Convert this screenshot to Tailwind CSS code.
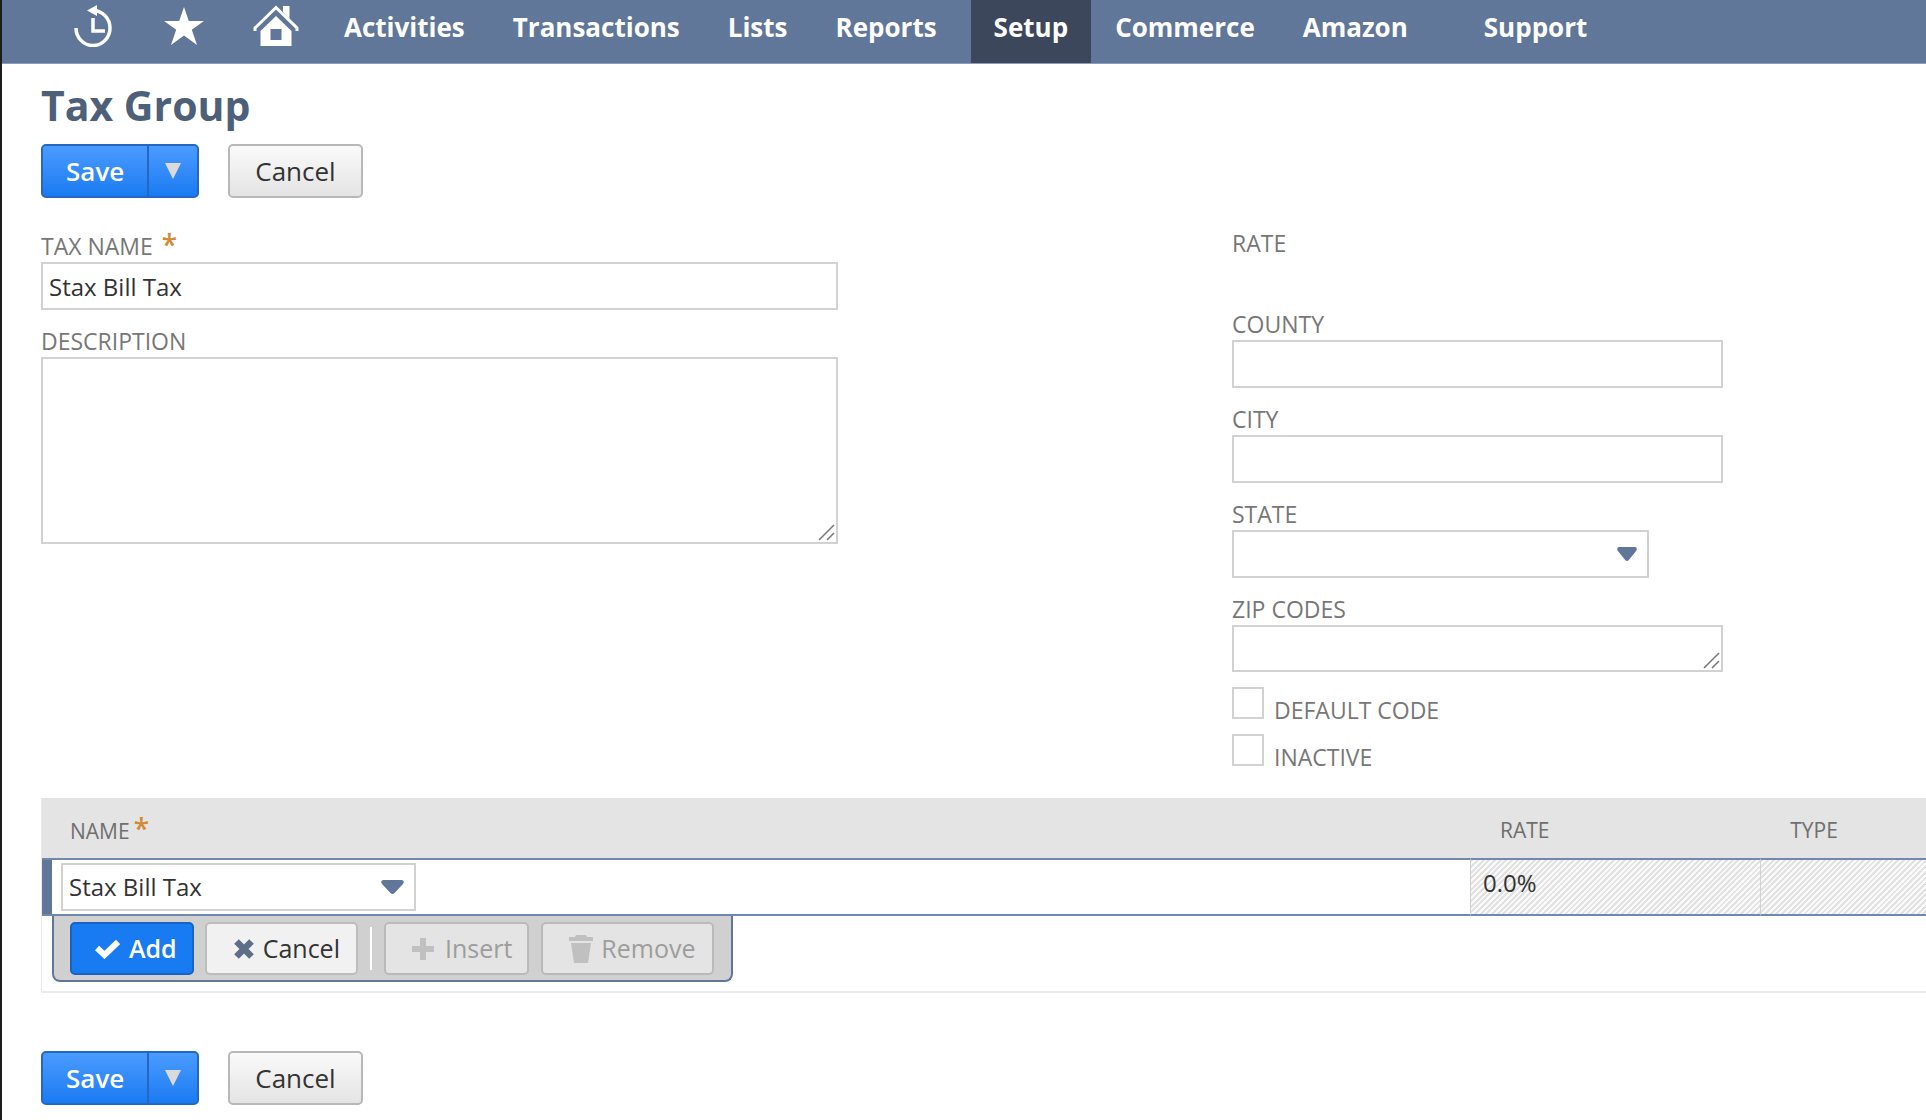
<!DOCTYPE html>
<html lang="en">
<head>
  <meta charset="UTF-8" />
  <meta name="viewport" content="width=device-width, initial-scale=1" />
  <title>Tax Group</title>
  <script src="https://cdn.jsdelivr.net/npm/@tailwindcss/browser@4"></script>
</head>
<body class="min-h-screen bg-white border-l-2 border-[#1c1c1c] font-['Open_Sans','Noto_Sans',sans-serif] text-2xl text-[#333333] overflow-x-hidden">

  <!-- Navigation -->
  <header class="bg-[#607799] border-b border-[#8c9dba]">
    <nav class="flex items-stretch h-[63px] pl-[71px] text-[26px] leading-[54px] font-bold text-white whitespace-nowrap">
      <a href="#" aria-label="Recent records" class="mr-[50px] pt-[5px]">
        <svg class="w-[40px] h-[42px]" viewBox="0 0 40 42" fill="none" stroke="#fff" stroke-width="3.500">
          <path d="M3 23a17 17.500 0 1 0 17-17.500" />
          <path d="M20 13v13h12" />
          <path d="M24 0v11L14 5.500z" fill="#fff" stroke="none" />
        </svg>
      </a>
      <a href="#" aria-label="Shortcuts" class="mr-[48px] pt-[6px]">
        <svg class="w-[42px] h-[40px]" viewBox="0 0 42 40" fill="#fff">
          <path d="M21 1l4.800 14H41L28.800 23.800 34 39 21 29.500 8 39l5.200-15.200L1 15h15.200z" />
        </svg>
      </a>
      <a href="#" aria-label="Home" class="mr-[21px] pt-[5px]">
        <svg class="w-[46px] h-[42px]" viewBox="0 0 46 42">
          <path d="M2 26V23L23 2.500 44 23v3" fill="none" stroke="#fff" stroke-width="3" />
          <path d="M30 1h6.500v13L30 7z" fill="#fff" />
          <path fill-rule="evenodd" d="M23 11L38.500 26v15h-31V26zM17.500 24v11h11V24z" fill="#fff" />
        </svg>
      </a>
      <a href="#" class="px-6">Activities</a>
      <a href="#" class="px-6">Transactions</a>
      <a href="#" class="px-6">Lists</a>
      <a href="#" class="px-6 mr-[10px]">Reports</a>
      <a href="#" class="px-[23px] bg-[#3c475c]">Setup</a>
      <a href="#" class="px-6">Commerce</a>
      <a href="#" class="px-6">Amazon</a>
      <a href="#" class="px-6 ml-[28px]">Support</a>
    </nav>
  </header>

  <main class="pl-[39px] pt-[17px]">
    <h1 class="text-[41px] leading-[48px] font-bold text-[#4d5f79]">Tax Group</h1>

    <div class="flex gap-[29px] mt-[15px] text-[26px] leading-[50px]">
      <div class="flex h-[54px] border-2 border-[#2468c4] rounded-[5px] bg-linear-to-b from-[#4a9bff] to-[#187bf2]">
        <button type="button" class="px-[23px] font-semibold text-white">Save</button>
        <button type="button" aria-label="More save options" class="w-[50px] border-l-2 border-[#2468c4] flex items-center justify-center">
          <svg class="w-[16px] h-[16px]" viewBox="0 0 16 16" fill="#dadada"><path d="M0 0h16L8 16z" /></svg>
        </button>
      </div>
      <button type="button" class="h-[54px] px-[25px] border-2 border-[#b8b8b8] rounded-[5px] bg-linear-to-b from-[#fafafa] to-[#e4e4e4]">Cancel</button>
    </div>

    <form class="grid grid-cols-[1191fr_694fr] mt-[29px] text-[23px] leading-[32px] text-[#777777]">
      <div class="flex flex-col gap-[15px] pt-[3px] max-w-[797px]">
        <div>
          <label for="taxName" class="block">TAX NAME <span class="ml-[3px] text-[28px] leading-none font-semibold text-[#d08b35]">*</span></label>
          <input id="taxName" type="text" value="Stax Bill Tax" class="block w-full h-12 px-[6px] border-2 border-[#d2d2d2] text-2xl text-[#333333]" />
        </div>
        <div>
          <label for="description" class="block">DESCRIPTION</label>
          <div class="relative">
            <textarea id="description" class="block w-full h-[187px] px-[6px] border-2 border-[#d2d2d2] resize-none"></textarea>
            <svg class="absolute right-[3px] bottom-[3px] w-[17px] h-[17px]" viewBox="0 0 17 17" stroke="#777" stroke-width="1.500"><path d="M1 16L16 1M9 16l7-7" /></svg>
          </div>
        </div>
      </div>

      <div>
        <p class="mb-[49px]">RATE</p>
        <div class="flex flex-col gap-[15px] max-w-[491px]">
          <div>
            <label for="county" class="block">COUNTY</label>
            <input id="county" type="text" class="block w-full h-12 px-[6px] border-2 border-[#d2d2d2]" />
          </div>
          <div>
            <label for="city" class="block">CITY</label>
            <input id="city" type="text" class="block w-full h-12 px-[6px] border-2 border-[#d2d2d2]" />
          </div>
          <div>
            <label for="state" class="block">STATE</label>
            <div class="relative w-[417px] max-w-full">
              <select id="state" class="block appearance-none w-full h-12 px-[6px] border-2 border-[#d2d2d2]"><option></option></select>
              <svg class="absolute right-[12px] top-[17px] w-[20px] h-[14px] pointer-events-none" viewBox="0 0 22 14" preserveAspectRatio="none" fill="#607799"><path d="M2 0h18q3 1 1 4l-8 9q-2 2-4 0L1 4q-2-3 1-4z" /></svg>
            </div>
          </div>
          <div>
            <label for="zip" class="block">ZIP CODES</label>
            <div class="relative">
              <textarea id="zip" rows="1" class="block w-full h-[47px] px-[6px] border-2 border-[#d2d2d2] resize-none"></textarea>
              <svg class="absolute right-[3px] bottom-[3px] w-[17px] h-[17px]" viewBox="0 0 17 17" stroke="#777" stroke-width="1.500"><path d="M1 16L16 1M9 16l7-7" /></svg>
            </div>
          </div>
          <div class="flex flex-col gap-2">
            <div class="flex items-baseline gap-[10px]">
              <input id="defaultCode" type="checkbox" class="appearance-none w-8 h-8 border-2 border-[#d2d2d2]" />
              <label for="defaultCode">DEFAULT CODE</label>
            </div>
            <div class="flex items-baseline gap-[10px]">
              <input id="inactive" type="checkbox" class="appearance-none w-8 h-8 border-2 border-[#d2d2d2]" />
              <label for="inactive">INACTIVE</label>
            </div>
          </div>
        </div>
      </div>
    </form>

    <!-- Tax items -->
    <section class="mt-[25px] border-l border-b-2 border-[#ebebeb] pb-[9px]">
      <table class="w-full table-fixed border-separate border-spacing-0">
        <colgroup>
          <col class="w-[75.8%]" />
          <col class="w-[15.4%]" />
          <col />
        </colgroup>
        <thead>
          <tr class="h-[60px] bg-[#e4e4e4] text-[21px] leading-[32px] text-left text-[#6f6f6f]">
            <th class="pl-[28px] pt-1 font-normal">NAME<span class="ml-[4px] text-[28px] leading-none font-semibold text-[#d08b35]">*</span></th>
            <th class="pl-[30px] pt-1 font-normal">RATE</th>
            <th class="pl-[30px] pt-1 font-normal">TYPE</th>
          </tr>
        </thead>
        <tbody>
          <tr class="h-[58px]">
            <td class="border-y-2 border-[#7189ae] p-0">
              <div class="border-l-[10px] border-[#607799] pl-[9px] py-[3px]">
                <div class="relative w-[355px]">
                  <select aria-label="Name" class="block appearance-none w-full h-12 px-[6px] border-2 border-[#d2d2d2] text-2xl"><option>Stax Bill Tax</option></select>
                  <svg class="absolute right-[12px] top-[17px] w-[23px] h-[14px] pointer-events-none" viewBox="0 0 22 14" preserveAspectRatio="none" fill="#607799"><path d="M2 0h18q3 1 1 4l-8 9q-2 2-4 0L1 4q-2-3 1-4z" /></svg>
                </div>
              </div>
            </td>
            <td class="border-y-2 border-y-[#7189ae] border-l border-l-[#d2d2d2] pl-[12px] pb-2 text-2xl leading-[32px] bg-[repeating-linear-gradient(135deg,#e2e2e2_0_2px,#fafafa_2px_4px)]">0.0%</td>
            <td class="border-y-2 border-y-[#7189ae] border-l border-l-[#d2d2d2] bg-[repeating-linear-gradient(135deg,#e2e2e2_0_2px,#fafafa_2px_4px)]"></td>
          </tr>
        </tbody>
      </table>

      <div class="flex w-fit ml-[10px] pl-4 pr-[17px] pt-[6px] pb-[5px] border-2 border-t-0 border-[#607799] rounded-b-lg bg-[#d0d0d0] text-[25px] leading-[49px]">
        <button type="button" class="flex items-center h-[53px] pl-[23px] pr-[15px] gap-[9px] border-2 border-[#1a62c4] rounded-[5px] bg-[#187bf2] text-white font-semibold">
          <svg class="w-[25px] h-[20px]" viewBox="0 0 25 20" fill="none" stroke="#fff" stroke-width="6"><path d="M2 9l7.500 7L23 3" /></svg>
          Add
        </button>
        <button type="button" class="flex items-center h-[53px] ml-[11px] pl-[27px] pr-[16px] gap-[9px] border-2 border-[#bdbdbd] rounded-[5px] bg-[#f1f1f1] font-medium">
          <svg class="w-[20px] h-[20px]" viewBox="0 0 20 20" fill="none" stroke="#5d6f87" stroke-width="6.500"><path d="M2.500 2.500l15 15M17.500 2.500l-15 15" /></svg>
          Cancel
        </button>
        <span class="w-[2px] h-[43px] mt-[5px] mx-[12px] bg-white"></span>
        <button type="button" disabled class="flex items-center h-[53px] pl-[26px] pr-[15px] gap-[11px] border-2 border-[#bababa] rounded-[5px] bg-[#e4e4e4] text-[#9d9d9d] font-medium">
          <svg class="w-[22px] h-[22px]" viewBox="0 0 22 22" fill="#c0c0c0"><path d="M8 0h6v8h8v6h-8v8H8v-8H0V8h8z" /></svg>
          Insert
        </button>
        <button type="button" disabled class="flex items-center h-[53px] ml-[12px] pl-[26px] pr-[16px] gap-[8px] border-2 border-[#bababa] rounded-[5px] bg-[#e4e4e4] text-[#9d9d9d] font-medium">
          <svg class="w-[24px] h-[28px]" viewBox="0 0 24 28" fill="#c0c0c0"><path d="M6 2l1-2h10l1 2h6v4H0V2zM2 8h20l-3 20H5z" /></svg>
          Remove
        </button>
      </div>
    </section>

    <div class="flex gap-[29px] mt-[58px] text-[26px] leading-[50px]">
      <div class="flex h-[54px] border-2 border-[#2468c4] rounded-[5px] bg-linear-to-b from-[#4a9bff] to-[#187bf2]">
        <button type="button" class="px-[23px] font-semibold text-white">Save</button>
        <button type="button" aria-label="More save options" class="w-[50px] border-l-2 border-[#2468c4] flex items-center justify-center">
          <svg class="w-[16px] h-[16px]" viewBox="0 0 16 16" fill="#dadada"><path d="M0 0h16L8 16z" /></svg>
        </button>
      </div>
      <button type="button" class="h-[54px] px-[25px] border-2 border-[#b8b8b8] rounded-[5px] bg-linear-to-b from-[#fafafa] to-[#e4e4e4]">Cancel</button>
    </div>
  </main>

</body>
</html>
